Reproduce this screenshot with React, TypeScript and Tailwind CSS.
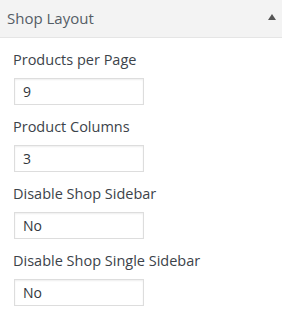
import React from "react";

const fields = [
  { label: "Products per Page", value: "9" },
  { label: "Product Columns", value: "3" },
  { label: "Disable Shop Sidebar", value: "No" },
  { label: "Disable Shop Single Sidebar", value: "No" },
];

export default function App() {
  return (
    <div className="w-[282px] h-[326px] bg-white" style={{ fontFamily: '"Open Sans", sans-serif' }}>
      <div className="h-[38px] bg-[#f3f3f3] border-b border-[#e5e5e5] flex items-center justify-between pl-[7px] pr-[6px]">
        <span className="text-[15px] text-[#555d66]">Shop Layout</span>
        <svg width="8" height="6" viewBox="0 0 8 6" className="mb-[4px]">
          <polygon points="4,0 8,6 0,6" fill="#555" />
        </svg>
      </div>
      <div className="flex flex-col gap-[12px] pt-[12px] px-[14px]">
        {fields.map((f) => (
          <div key={f.label} className="flex flex-col gap-[8px]">
            <div className="text-[14.5px] font-medium text-[#3c434a] leading-[20px] -ml-px">{f.label}</div>
            <div className="w-[130px] h-[27px] border border-[#ddd] flex items-center pl-[8px] text-[14px] text-[#32373c] shadow-[inset_0_1px_2px_rgba(0,0,0,0.07)]">
              {f.value}
            </div>
          </div>
        ))}
      </div>
    </div>
  );
}
